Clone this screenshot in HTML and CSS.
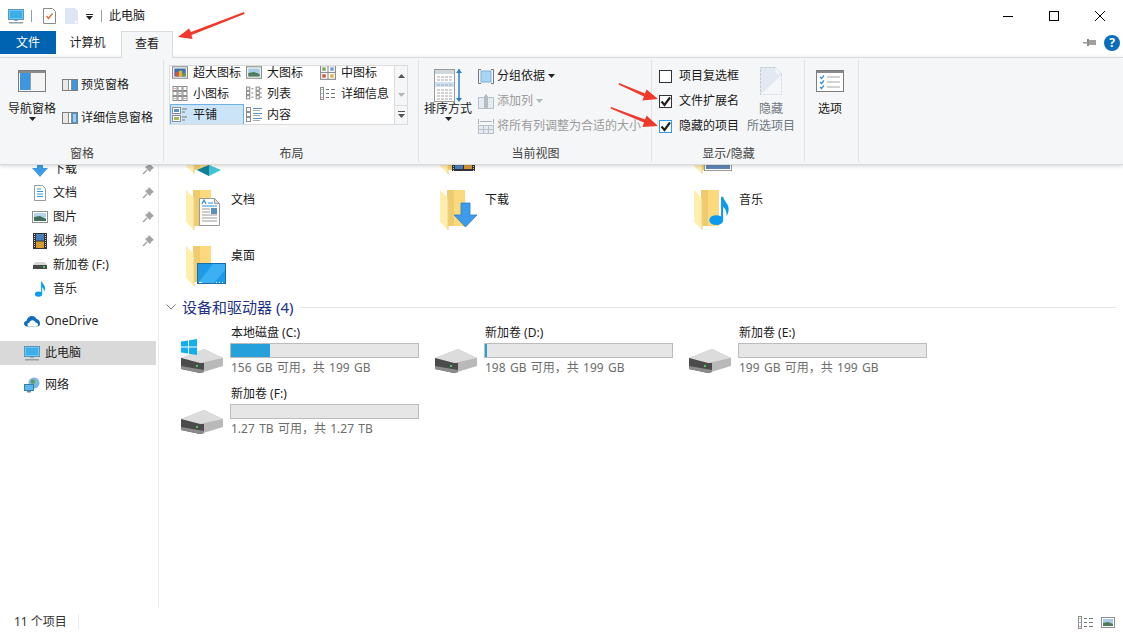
FILE: index.html
```html
<!DOCTYPE html>
<html lang="zh-CN">
<head>
  <meta charset="UTF-8">
  <title>此电脑</title>
  <link rel="stylesheet" href="styles.css">
</head>
<body>

  <!-- shared icons -->
  <svg class="defs" xmlns="http://www.w3.org/2000/svg">
    <symbol id="folder" viewBox="0 0 45 48">
      <rect x="7" y="6" width="18" height="36" fill="#fbd97c"/>
      <rect x="7" y="6" width="7" height="36" fill="#eecb6f"/>
      <polygon points="0,6 8,14 8,46 0,38" fill="#ffeeb0"/>
      <line x1="8" y1="14" x2="8" y2="46" stroke="#f0d283"/>
    </symbol>
    <symbol id="drive" viewBox="0 0 42 24">
      <polygon points="0,9 23,0 42,9 42,17 19,24 0,18" fill="#b9b9b9"/>
      <polygon points="0,9 23,0 42,9 19,14" fill="#dcdcdc"/>
      <polygon points="0,9 19,14 23,14 23,23 19,24 0,20" fill="#4b4b4b"/>
      <polygon points="0,17 23,21 23,23 19,24 0,20" fill="#8b8b8b"/>
      <rect x="15" y="16" width="2" height="2" fill="#3ecf4a"/>
    </symbol>
    <symbol id="pc" viewBox="0 0 16 16">
      <rect x="0.5" y="1.5" width="15" height="10" fill="#6cc7f5" stroke="#5a97b8"/>
      <rect x="2" y="3" width="12" height="7" fill="#3eaee8"/>
      <rect x="6" y="12" width="4" height="1" fill="#9aa7ae"/>
      <rect x="1" y="14" width="14" height="1.5" fill="#8fa0aa"/>
    </symbol>
    <symbol id="pane" viewBox="0 0 16 12">
      <rect x="0.5" y="0.5" width="15" height="11" fill="#fff" stroke="#7f7f7f"/>
      <rect x="1" y="1" width="5" height="10" fill="#e8e8e8"/>
      <rect x="6" y="1" width="1" height="10" fill="#8c8c8c"/>
    </symbol>
    <symbol id="pin" viewBox="0 0 12 12">
      <polygon points="7,0 12,5 10,6 8,9 3,4 6,2" fill="#a3a3a3"/>
      <line x1="5" y1="7" x2="1" y2="11" stroke="#a3a3a3" stroke-width="1.4"/>
    </symbol>
    <symbol id="caret" viewBox="0 0 7 4">
      <polygon points="0,0 7,0 3.5,4" fill="#222"/>
    </symbol>
    <symbol id="check" viewBox="0 0 11 11">
      <path d="M1.500 5.500l3 3.500 5.500-7.500" fill="none" stroke="#222" stroke-width="2.200"/>
    </symbol>
    <symbol id="note" viewBox="0 0 16 22">
      <ellipse cx="6" cy="18" rx="5" ry="3.6" fill="#0a9bf0"/>
      <path d="M9.5 18V1h1.5c.4 3 4 4.600 4 9 0 2-.6 3.500-1.500 5 .3-3-1-5.500-2.500-6.500V18z" fill="#0a9bf0"/>
    </symbol>
    <symbol id="sm-thumb" viewBox="0 0 14 11">
      <rect x="0.500" y="0.500" width="13" height="10" fill="#fff" stroke="#8e8e8e"/>
      <rect x="2" y="2" width="10" height="7" fill="#a9cbe6"/>
      <polygon points="2,9 2,6 7,5 12,7 12,9" fill="#4f7a5c"/>
    </symbol>
    <symbol id="xl-thumb" viewBox="0 0 14 11">
      <rect x="0.500" y="0.500" width="13" height="10" fill="#fff" stroke="#8e8e8e"/>
      <rect x="2" y="2" width="10" height="7" fill="#3f6fa8"/>
      <rect x="3" y="5" width="3" height="4" fill="#d2563c"/>
      <rect x="6" y="4" width="3" height="5" fill="#e0b040"/>
      <rect x="9" y="6" width="3" height="3" fill="#6f9a4a"/>
    </symbol>
    <symbol id="grid-2" viewBox="0 0 14 13">
      <rect x="0.500" y="0.500" width="13" height="12" fill="#fff" stroke="#8e8e8e"/>
      <line x1="7" y1="0.500" x2="7" y2="12.500" stroke="#8e8e8e"/>
      <line x1="0.500" y1="6.500" x2="13.500" y2="6.500" stroke="#8e8e8e"/>
      <rect x="2" y="2" width="3" height="3" fill="#7ea75f"/>
      <rect x="9" y="2" width="3" height="3" fill="#6aa0d0"/>
      <rect x="2" y="8" width="3" height="3" fill="#d2563c"/>
      <rect x="9" y="8" width="3" height="3" fill="#e0b040"/>
    </symbol>
    <symbol id="grid-3" viewBox="0 0 15 15">
      <g fill="none" stroke="#8e8e8e">
        <rect x="0.500" y="0.500" width="4" height="4"/><rect x="5.500" y="0.500" width="4" height="4"/><rect x="10.500" y="0.500" width="4" height="4"/>
        <rect x="0.500" y="5.500" width="4" height="4"/><rect x="5.500" y="5.500" width="4" height="4"/><rect x="10.500" y="5.500" width="4" height="4"/>
        <rect x="0.500" y="10.500" width="4" height="4"/><rect x="5.500" y="10.500" width="4" height="4"/><rect x="10.500" y="10.500" width="4" height="4"/>
      </g>
      <rect x="2" y="2" width="1" height="1" fill="#c0392b"/><rect x="7" y="7" width="1" height="1" fill="#4a8fd0"/>
      <rect x="12" y="12" width="1" height="1" fill="#c0392b"/><rect x="2" y="12" width="1" height="1" fill="#5c9a4a"/>
    </symbol>
    <symbol id="list-2" viewBox="0 0 15 13">
      <g fill="none" stroke="#8e8e8e">
        <rect x="0.500" y="0.500" width="3" height="3"/><rect x="0.500" y="4.500" width="3" height="3"/><rect x="0.500" y="8.500" width="3" height="3"/>
        <rect x="9.500" y="0.500" width="3" height="3"/><rect x="9.500" y="4.500" width="3" height="3"/><rect x="9.500" y="8.500" width="3" height="3"/>
      </g>
      <g stroke="#8e8e8e"><line x1="5" y1="2" x2="7" y2="2"/><line x1="5" y1="6" x2="7" y2="6"/><line x1="5" y1="10" x2="7" y2="10"/><line x1="13" y1="2" x2="15" y2="2"/><line x1="13" y1="6" x2="15" y2="6"/><line x1="13" y1="10" x2="15" y2="10"/></g>
    </symbol>
    <symbol id="rows" viewBox="0 0 16 13">
      <g fill="#fff" stroke="#8e8e8e">
        <rect x="0.500" y="0.500" width="3" height="12"/>
      </g>
      <rect x="1.500" y="2" width="1" height="1" fill="#5c9a4a"/><rect x="1.500" y="6" width="1" height="1" fill="#4a8fd0"/><rect x="1.500" y="10" width="1" height="1" fill="#d2423c"/>
      <g stroke="#777"><line x1="6" y1="2.500" x2="9" y2="2.500"/><line x1="11" y1="2.500" x2="15" y2="2.500"/><line x1="6" y1="6.500" x2="9" y2="6.500"/><line x1="11" y1="6.500" x2="15" y2="6.500"/><line x1="6" y1="10.500" x2="9" y2="10.500"/><line x1="11" y1="10.500" x2="15" y2="10.500"/></g>
    </symbol>
    <symbol id="tile" viewBox="0 0 16 15">
      <rect x="0.500" y="0.500" width="8" height="6" fill="#fff" stroke="#8e8e8e"/>
      <rect x="2" y="2" width="5" height="3" fill="#5b93c9"/>
      <rect x="0.500" y="8.500" width="8" height="6" fill="#fff" stroke="#8e8e8e"/>
      <rect x="2" y="10" width="5" height="3" fill="#a3b84e"/>
      <g stroke="#777"><line x1="10" y1="2" x2="15" y2="2"/><line x1="10" y1="5" x2="13" y2="5"/><line x1="10" y1="10" x2="15" y2="10"/><line x1="10" y1="13" x2="13" y2="13"/></g>
    </symbol>
    <symbol id="content" viewBox="0 0 16 15">
      <g fill="#fff" stroke="#8e8e8e"><rect x="0.500" y="0.500" width="4" height="4"/><rect x="0.500" y="5.500" width="4" height="4"/><rect x="0.500" y="10.500" width="4" height="4"/></g>
      <g stroke="#5c8fc4"><line x1="7" y1="1.500" x2="16" y2="1.500"/><line x1="7" y1="6.500" x2="16" y2="6.500"/><line x1="7" y1="11.500" x2="16" y2="11.500"/></g>
      <g stroke="#aaa"><line x1="7" y1="3.500" x2="14" y2="3.500"/><line x1="7" y1="8.500" x2="14" y2="8.500"/><line x1="7" y1="13.500" x2="14" y2="13.500"/></g>
    </symbol>
  </svg>

  <header class="titlebar">
    <svg class="qa-pc"><use href="#pc"/></svg>
    <span class="qa-sep"></span>
    <svg class="qa-doc" viewBox="0 0 13 16">
      <path d="M.5.500h9l3 3v12H.5z" fill="#fff" stroke="#8a8a8a"/>
      <path d="M3.500 8l2 2.500 4-5" fill="none" stroke="#e8642c" stroke-width="1.300"/>
    </svg>
    <svg class="qa-page" viewBox="0 0 13 16">
      <path d="M0 0h10l3 3v13H0z" fill="#dfe6f3"/>
      <path d="M10 16v-3h3z" fill="#fff"/>
    </svg>
    <svg class="qa-more" viewBox="0 0 7 6">
      <rect width="7" height="1" fill="#222"/>
      <polygon points="0,2 7,2 3.500,6" fill="#222"/>
    </svg>
    <span class="qa-sep qa-sep-2"></span>
    <span class="title">此电脑</span>
    <div class="caption">
      <span class="cap-btn"><svg width="12" height="12" viewBox="0 0 12 12"><line x1="1" y1="6.500" x2="11" y2="6.500" stroke="#000"/></svg></span>
      <span class="cap-btn"><svg width="12" height="12" viewBox="0 0 12 12"><rect x="1.500" y="1.500" width="9" height="9" fill="none" stroke="#000"/></svg></span>
      <span class="cap-btn"><svg width="12" height="12" viewBox="0 0 12 12"><path d="M1 1l10 10M11 1L1 11" stroke="#000"/></svg></span>
    </div>
  </header>

  <nav class="tabs">
    <span class="tab tab-file">文件</span>
    <span class="tab tab-pc">计算机</span>
    <span class="tab tab-view">查看</span>
    <div class="tabs-right">
      <svg class="tab-pin" viewBox="0 0 13 9">
        <rect x="0" y="4" width="5" height="1.500" fill="#9a9a9a"/>
        <rect x="4" y="1" width="2" height="7" fill="#8e8e8e"/>
        <rect x="6" y="2" width="7" height="5" fill="#a0a0a0"/>
      </svg>
      <span class="help">?</span>
    </div>
  </nav>

  <section class="ribbon">

    <div class="group group-pane">
      <div class="group-body">
        <div class="big-btn">
          <svg class="big-icon nav-icon" viewBox="0 0 28 22">
            <rect x="0.500" y="0.500" width="27" height="21" fill="#f4f4f4" stroke="#7d7d7d"/>
            <rect x="1" y="1" width="26" height="2" fill="#8a8a8a"/>
            <rect x="2" y="3" width="10" height="17" fill="#3d96e0"/>
            <rect x="12" y="3" width="1" height="17" fill="#9a9a9a"/>
          </svg>
          <span class="big-label">导航窗格</span>
          <svg class="caret"><use href="#caret"/></svg>
        </div>
        <div class="small-col pane-col">
          <div class="small-row">
            <svg class="pane-icon" viewBox="0 0 16 12">
              <use href="#pane" width="16" height="12"/>
              <rect x="10" y="1" width="5" height="10" fill="#3d96e0"/>
              <rect x="9" y="1" width="1" height="10" fill="#8c8c8c"/>
            </svg>
            <span>预览窗格</span>
          </div>
          <div class="small-row">
            <svg class="pane-icon" viewBox="0 0 16 12">
              <use href="#pane" width="16" height="12"/>
              <rect x="10" y="1" width="5" height="10" fill="#3d96e0"/>
              <rect x="9" y="1" width="1" height="10" fill="#8c8c8c"/>
              <path d="M11 3h3M11 5h3M11 7h3M11 9h3" stroke="#fff"/>
            </svg>
            <span>详细信息窗格</span>
          </div>
        </div>
      </div>
      <div class="group-label">窗格</div>
    </div>

    <div class="group group-layout">
      <div class="group-body">
        <div class="gallery">
          <div class="gallery-items">
            <div class="g-item"><svg class="g-icon"><use href="#xl-thumb"/></svg>超大图标</div>
            <div class="g-item"><svg class="g-icon"><use href="#sm-thumb"/></svg>大图标</div>
            <div class="g-item"><svg class="g-icon"><use href="#grid-2"/></svg>中图标</div>
            <div class="g-item"><svg class="g-icon"><use href="#grid-3"/></svg>小图标</div>
            <div class="g-item"><svg class="g-icon"><use href="#list-2"/></svg>列表</div>
            <div class="g-item"><svg class="g-icon"><use href="#rows"/></svg>详细信息</div>
            <div class="g-item selected"><svg class="g-icon"><use href="#tile"/></svg>平铺</div>
            <div class="g-item"><svg class="g-icon"><use href="#content"/></svg>内容</div>
          </div>
          <div class="gallery-scroll">
            <span><svg width="7" height="4" viewBox="0 0 7 4"><polygon points="3.500,0 7,4 0,4" fill="#555"/></svg></span>
            <span><svg width="7" height="4" viewBox="0 0 7 4"><polygon points="0,0 7,0 3.500,4" fill="#b5b5b5"/></svg></span>
            <span class="more"><svg width="7" height="7" viewBox="0 0 7 7"><rect width="7" height="1" fill="#555"/><polygon points="0,3 7,3 3.500,7" fill="#555"/></svg></span>
          </div>
        </div>
      </div>
      <div class="group-label">布局</div>
    </div>

    <div class="group group-view">
      <div class="group-body">
        <div class="big-btn">
          <svg class="big-icon sort-icon" viewBox="0 0 28 37">
            <rect x="0.500" y="2.500" width="20" height="32" fill="#fff" stroke="#9a9a9a"/>
            <rect x="1" y="3" width="19" height="4" fill="#cfd6dc"/>
            <rect x="1" y="15" width="19" height="5" fill="#cfe2f3"/>
            <path d="M3 10h15M3 13h15M3 18h15M3 23h15M3 26h15M3 29h15M3 32h15" stroke="#a5a5a5" stroke-dasharray="3 1"/>
            <path d="M25 2v32" stroke="#2f7fc7" stroke-width="1.500"/>
            <path d="M22 6l3-4 3 4zM22 31l3 4 3-4z" fill="#2f7fc7"/>
          </svg>
          <span class="big-label">排序方式</span>
          <svg class="caret"><use href="#caret"/></svg>
        </div>
        <div class="small-col view-col">
          <div class="small-row">
            <svg class="view-icon" viewBox="0 0 16 15">
              <path d="M3 .5H.5v14H3M13 .5h2.500v14H13" fill="none" stroke="#777"/>
              <rect x="3" y="2" width="10" height="11" fill="#a8d4f5" stroke="#7fb1d8"/>
            </svg>
            <span>分组依据</span>
            <svg class="caret inline-caret"><use href="#caret"/></svg>
          </div>
          <div class="small-row disabled">
            <svg class="view-icon" viewBox="0 0 16 15">
              <rect x="0.500" y="3.500" width="15" height="11" fill="#e4ebf2" stroke="#b9c2cb"/>
              <rect x="6" y="3" width="4" height="12" fill="#b5bdc5"/>
              <polygon points="8,0 10,3 6,3" fill="#aab2ba"/>
            </svg>
            <span>添加列</span>
            <svg class="caret inline-caret faded"><use href="#caret"/></svg>
          </div>
          <div class="small-row disabled">
            <svg class="view-icon" viewBox="0 0 16 15">
              <path d="M.5 0v5M15.500 0v5M2 2.500h12" fill="none" stroke="#aab2ba"/>
              <rect x="0.500" y="6.500" width="15" height="8" fill="#e4ebf2" stroke="#b9c2cb"/>
              <path d="M5.500 7v7M10.500 7v7M1 10.500h14" stroke="#b9c2cb"/>
            </svg>
            <span>将所有列调整为合适的大小</span>
          </div>
        </div>
      </div>
      <div class="group-label">当前视图</div>
    </div>

    <div class="group group-show">
      <div class="group-body">
        <div class="small-col check-col">
          <label class="small-row check-row"><span class="box"></span>项目复选框</label>
          <label class="small-row check-row"><span class="box"><svg class="tick"><use href="#check"/></svg></span>文件扩展名</label>
          <label class="small-row check-row"><span class="box focus"><svg class="tick"><use href="#check"/></svg></span>隐藏的项目</label>
        </div>
        <div class="hide-btn">
          <svg class="hide-icon" viewBox="0 0 22 28">
            <path d="M.5.500h15l6 6v21H.5z" fill="#e3e9f3" stroke="#c3cad4" stroke-dasharray="3 1"/>
            <path d="M15.500.5v6h6zM.5 27.500L21.500 8v19.500z" fill="#f4f6f9"/>
          </svg>
          <span class="hide-label">隐藏</span>
          <span class="hide-label second">所选项目</span>
        </div>
      </div>
      <div class="group-label">显示/隐藏</div>
    </div>

    <div class="group group-options">
      <div class="group-body">
        <div class="big-btn options-btn">
          <svg class="big-icon nav-icon" viewBox="0 0 28 22">
            <rect x="0.500" y="0.500" width="27" height="21" fill="#fff" stroke="#7d7d7d"/>
            <rect x="1" y="1" width="26" height="2" fill="#8a8a8a"/>
            <path d="M4 7l1.500 1.500L8 5.500M4 12l1.500 1.500L8 10.500M4 17l1.500 1.500L8 15.500" fill="none" stroke="#2f8fde" stroke-width="1.200"/>
            <path d="M11 7h13M11 12h13M11 17h13" stroke="#a5a5a5"/>
          </svg>
          <span class="big-label">选项</span>
        </div>
      </div>
    </div>
  </section>

  <main class="main">
    <aside class="sidebar">
      <div class="side-row sub">
        <svg class="side-icon" viewBox="0 0 16 16"><polygon points="5,0 11,0 11,7 16,7 8,16 0,7 5,7" fill="#3d9be9"/></svg>
        <span class="side-text">下载</span><svg class="side-pin"><use href="#pin"/></svg>
      </div>
      <div class="side-row sub">
        <svg class="side-icon" viewBox="0 0 16 16">
          <path d="M2.500.5h8l3 3v12h-11z" fill="#fff" stroke="#9a9a9a"/>
          <path d="M5 4h4M5 6.500h6M5 9h6M5 11.500h6" stroke="#2f9be0"/>
        </svg>
        <span class="side-text">文档</span><svg class="side-pin"><use href="#pin"/></svg>
      </div>
      <div class="side-row sub">
        <svg class="side-icon" viewBox="0 0 16 16">
          <rect x="0.500" y="2.500" width="15" height="11" fill="#fff" stroke="#8e8e8e"/>
          <rect x="2" y="4" width="12" height="8" fill="#b5d3ea"/>
          <polygon points="2,12 2,8 8,7 14,10 14,12" fill="#3f6f5c"/>
        </svg>
        <span class="side-text">图片</span><svg class="side-pin"><use href="#pin"/></svg>
      </div>
      <div class="side-row sub">
        <svg class="side-icon" viewBox="0 0 16 16">
          <rect x="1" y="0" width="14" height="16" fill="#333"/>
          <rect x="4" y="1" width="8" height="6.500" fill="#4a7fc0"/>
          <rect x="4" y="8.500" width="8" height="6.500" fill="#d89a30"/>
          <path d="M2.500 1v14M13.500 1v14" stroke="#ccc" stroke-dasharray="1 1"/>
        </svg>
        <span class="side-text">视频</span><svg class="side-pin"><use href="#pin"/></svg>
      </div>
      <div class="side-row sub">
        <svg class="side-icon" viewBox="0 0 16 16">
          <path d="M1 8c1-2 2-3 4-3h6c2 0 3 1 4 3z" fill="#d5d5d5"/>
          <rect x="1" y="8" width="14" height="4" fill="#4a4a4a"/>
          <rect x="11" y="9" width="2" height="2" fill="#3ecf4a"/>
        </svg>
        <span class="side-text">新加卷 (F:)</span>
      </div>
      <div class="side-row sub">
        <svg class="side-icon" viewBox="0 0 16 22"><use href="#note"/></svg>
        <span class="side-text">音乐</span>
      </div>
      <div class="side-row top gap">
        <svg class="side-icon" viewBox="0 0 16 12">
          <path d="M3 11.500C1 11.500 0 10 0 8.500S1 6 2.500 6C3 3 5 1 8 1c2 0 3.500 1 4.500 3C14.500 4.500 16 6 16 8.500c0 2-1 3-3 3z" fill="#0f6cbd"/>
          <path d="M5.500 11.500c-1.500 0-2-1-2-2s.7-2 2-2c.6-1.500 1.700-2.300 3-2.300 1.500 0 2.700 1 3 2.300 1.500 0 2.500 1 2.500 2s-.6 2-2 2z" fill="#fff"/>
        </svg>
        <span class="side-text">OneDrive</span>
      </div>
      <div class="side-row top gap active">
        <svg class="side-icon"><use href="#pc"/></svg>
        <span class="side-text">此电脑</span>
      </div>
      <div class="side-row top gap">
        <svg class="side-icon" viewBox="0 0 16 16">
          <circle cx="10" cy="6" r="5.500" fill="#7fb6de"/>
          <path d="M7 3c2-1 4 0 4 2s-3 2-4 1z" fill="#5a9a5a"/>
          <rect x="0.500" y="7.500" width="9" height="6" fill="#5ab8ee" stroke="#3a7ea8"/>
          <rect x="3" y="14" width="4" height="1.500" fill="#6a8ea8"/>
        </svg>
        <span class="side-text">网络</span>
      </div>
    </aside>

    <div class="content">
      <div class="folders">
        <div class="folder">
          <svg class="folder-icon" viewBox="0 0 45 48">
            <use href="#folder" width="45" height="48"/>
            <polygon points="11,42 23,37 35,42 23,48" fill="#3fc3d5"/>
            <polygon points="11,42 23,48 23,37" fill="#157f98"/>
          </svg>
        </div>
        <div class="folder">
          <svg class="folder-icon" viewBox="0 0 45 48">
            <use href="#folder" width="45" height="48"/>
            <rect x="12" y="30" width="23" height="13" fill="#333"/>
            <rect x="15" y="30" width="8" height="11" fill="#4a7fc0"/>
            <rect x="24" y="30" width="8" height="11" fill="#d89a30"/>
            <path d="M13.500 30v13M33.500 30v13" stroke="#ccc" stroke-dasharray="1 1"/>
          </svg>
        </div>
        <div class="folder">
          <svg class="folder-icon" viewBox="0 0 45 48">
            <use href="#folder" width="45" height="48"/>
            <rect x="10.500" y="28.500" width="27" height="14" fill="#fff" stroke="#9a9a9a"/>
            <rect x="12" y="30" width="24" height="11" fill="#5f87b5"/>
          </svg>
        </div>
        <div class="folder">
          <svg class="folder-icon" viewBox="0 0 45 48">
            <use href="#folder" width="45" height="48"/>
            <path d="M13.500 14.500h15l5 5v22h-20z" fill="#fff" stroke="#9a9a9a"/>
            <path d="M28.500 14.500v5h5z" fill="#ddd" stroke="#9a9a9a"/>
            <path d="M16 20l2-4 2 4M22 19h5M16 22h15" fill="none" stroke="#2f8fde" stroke-width="1.200"/>
            <path d="M16 25h8M16 28h8M16 31h15M16 34h15M16 37h15" stroke="#999"/>
            <rect x="25" y="24" width="6" height="6" fill="#5f8fb5"/>
          </svg>
          <span>文档</span>
        </div>
        <div class="folder">
          <svg class="folder-icon" viewBox="0 0 45 48">
            <use href="#folder" width="45" height="48"/>
            <polygon points="21,19 30,19 30,31 37,31 25.500,43 14,31 21,31" fill="#3d9be9" stroke="#2a7fc9" stroke-width="0.800"/>
          </svg>
          <span>下载</span>
        </div>
        <div class="folder">
          <svg class="folder-icon" viewBox="0 0 45 48">
            <use href="#folder" width="45" height="48"/>
            <use href="#note" x="14" y="10" width="22" height="33"/>
          </svg>
          <span>音乐</span>
        </div>
        <div class="folder">
          <svg class="folder-icon" viewBox="0 0 45 48">
            <use href="#folder" width="45" height="48"/>
            <rect x="11.500" y="23.500" width="28" height="20" fill="#1e9be8" stroke="#1a6ca8"/>
            <polygon points="12,43 27,24 39,24 39,30 28,43" fill="#3bb0f2"/>
            <path d="M13 42.500h3M30 42.500h1M33 42.500h1M36 42.500h1" stroke="#fff"/>
          </svg>
          <span>桌面</span>
        </div>
      </div>

      <div class="section-head">
        <svg class="chevron" viewBox="0 0 10 6"><path d="M.5.500L5 5 9.500.5" fill="none" stroke="#777"/></svg>
        <span class="section-title">设备和驱动器 (4)</span>
        <span class="section-line"></span>
      </div>

      <div class="drives">
        <div class="drive">
          <div class="drive-icon">
            <svg class="hdd"><use href="#drive"/></svg>
            <svg class="win-logo" viewBox="0 0 16 16"><path d="M0 2.500l7-1v6H0zM8 1.300L16 0v7.500H8zM0 8.500h7v6l-7-1zM8 8.500h8V16l-8-1.200z" fill="#12aef0"/></svg>
          </div>
          <div class="drive-info">
            <div class="drive-name">本地磁盘 (C:)</div>
            <div class="bar"><div class="bar-fill" style="width: 21%"></div></div>
            <div class="drive-free">156 GB 可用，共 199 GB</div>
          </div>
        </div>
        <div class="drive">
          <div class="drive-icon"><svg class="hdd"><use href="#drive"/></svg></div>
          <div class="drive-info">
            <div class="drive-name">新加卷 (D:)</div>
            <div class="bar"><div class="bar-fill" style="width: 1%"></div></div>
            <div class="drive-free">198 GB 可用，共 199 GB</div>
          </div>
        </div>
        <div class="drive">
          <div class="drive-icon"><svg class="hdd"><use href="#drive"/></svg></div>
          <div class="drive-info">
            <div class="drive-name">新加卷 (E:)</div>
            <div class="bar"></div>
            <div class="drive-free">199 GB 可用，共 199 GB</div>
          </div>
        </div>
        <div class="drive">
          <div class="drive-icon"><svg class="hdd"><use href="#drive"/></svg></div>
          <div class="drive-info">
            <div class="drive-name">新加卷 (F:)</div>
            <div class="bar"></div>
            <div class="drive-free">1.27 TB 可用，共 1.27 TB</div>
          </div>
        </div>
      </div>
    </div>
  </main>

  <footer class="statusbar">
    <span class="status-text">11 个项目</span>
    <span class="status-sep"></span>
    <div class="status-views">
      <svg class="view-a"><use href="#rows"/></svg>
      <svg class="view-b"><use href="#sm-thumb"/></svg>
    </div>
  </footer>

  <!-- red annotation arrows drawn over the screenshot -->
  <svg class="annotations" viewBox="0 0 1123 632">
    <polygon points="244,12 191,32 189,28.500 178,37 192.500,39 191.500,35 244.500,14"/>
    <polygon points="619,83 645,93.500 646.500,89.500 658,99 642.500,100.500 644,96.500 618.500,84.500"/>
    <polygon points="611,107 645,119.500 646.500,115.500 658,126 642.500,127 644,122.500 610.500,108.500"/>
  </svg>

</body>
</html>
```

FILE: styles.css
```css
* {
  box-sizing: border-box;
}

html, body {
  margin: 0;
  height: 632px;
  overflow: hidden;
}

body {
  display: flex;
  flex-direction: column;
  position: relative;
  background-color: #fff;
  color: #1a1a1a;
  font-family: "Noto Sans", "Noto Sans CJK SC", sans-serif;
  font-size: 12px;
  line-height: 16px;
}

svg {
  display: block;
  flex: none;
}

.defs {
  width: 0;
  height: 0;
  position: absolute;
}

/* title bar */
.titlebar {
  height: 31px;
  display: flex;
  align-items: center;
  padding-left: 8px;
  flex: none;
}

.qa-pc { width: 16px; height: 16px; }
.qa-sep { width: 1px; height: 12px; background-color: #9a9a9a; margin-left: 7px; }
.qa-doc { width: 13px; height: 16px; margin-left: 11px; }
.qa-page { width: 13px; height: 16px; margin-left: 9px; }
.qa-more { width: 7px; height: 6px; margin-left: 8px; margin-top: 3px; }
.qa-sep-2 { margin-left: 8px; }
.title { margin-left: 7px; }

.caret { width: 7px; height: 4px; }

.caption {
  margin-left: auto;
  display: flex;
  height: 100%;
}

.cap-btn {
  width: 46px;
  display: flex;
  align-items: center;
  justify-content: center;
}

/* tabs */
.tabs {
  height: 26px;
  display: flex;
  flex: none;
  position: relative;
  z-index: 3;
}

.tab {
  display: flex;
  align-items: center;
  justify-content: center;
  height: 23px;
}

.tab-file {
  width: 56px;
  background-color: #0063b1;
  color: #fff;
}

.tab-pc { width: 63px; margin-right: 2px; }

.tab-view {
  width: 52px;
  height: 27px;
  background-color: #f5f6f7;
  border: 1px solid #dadbdc;
  border-bottom: 0;
  padding-bottom: 3px;
}

.tabs-right {
  margin-left: auto;
  display: flex;
  align-items: center;
  padding-right: 3px;
  height: 23px;
}

.tab-pin { width: 13px; height: 9px; margin-right: 8px; }

.help {
  width: 16px;
  height: 16px;
  border-radius: 50%;
  background-color: #0a6ebd;
  color: #fff;
  font-weight: 700;
  font-size: 12px;
  text-align: center;
}

/* ribbon */
.ribbon {
  height: 108px;
  flex: none;
  display: flex;
  background-color: #f5f6f7;
  border-top: 1px solid #dadbdc;
  border-bottom: 1px solid #dadbdc;
  box-shadow: 0 1px 4px rgba(0, 0, 0, 0.18);
  position: relative;
  z-index: 2;
}

.group {
  display: flex;
  flex-direction: column;
  position: relative;
  flex: none;
}

.group::after {
  content: "";
  position: absolute;
  right: 0;
  top: 2px;
  bottom: 2px;
  width: 1px;
  background-color: #e1e2e3;
}

.group-pane { width: 164px; }
.group-layout { width: 255px; }
.group-view { width: 233px; }
.group-show { width: 153px; }
.group-options { width: 54px; }

.group-body {
  flex: 1;
  display: flex;
  min-height: 0;
}

.group-label {
  height: 22px;
  line-height: 24px;
  text-align: center;
  color: #444;
}

.group-pane .group-body { padding-left: 8px; }
.group-view .group-body { padding-left: 5px; }
.group-show .group-body { padding-left: 7px; }
.group-layout .group-body { padding: 7px 0 0 5px; }
.group-options .group-body { padding-left: 1px; }

.big-btn {
  width: 48px;
  display: flex;
  flex-direction: column;
  align-items: center;
}

.big-icon { width: 28px; }
.nav-icon { height: 22px; margin-top: 12px; }
.sort-icon { height: 37px; margin-top: 9px; }
.big-label { white-space: nowrap; margin-top: 9px; }
.sort-icon + .big-label { margin-top: -3px; }
.big-btn .caret { margin-top: 0; }

.small-col {
  display: flex;
  flex-direction: column;
}

.small-row {
  display: flex;
  align-items: center;
  height: 16px;
  white-space: nowrap;
}

.pane-col { margin-left: 6px; padding-top: 19px; gap: 17px; }
.pane-icon { width: 16px; height: 12px; margin-right: 3px; }

.view-col { margin-left: 6px; padding-top: 10px; gap: 9px; }
.view-icon { width: 16px; height: 15px; margin-right: 3px; }
.disabled { color: #9a9a9a; }
.inline-caret { margin-left: 3px; }
.faded { opacity: 0.3; }

.check-col { padding-top: 10px; gap: 9px; }
.check-row { gap: 7px; }

.box {
  width: 13px;
  height: 13px;
  flex: none;
  border: 1px solid #333;
  background-color: #fff;
  position: relative;
}

.box.focus { border-color: #2f9bf0; }

.tick {
  width: 11px;
  height: 11px;
}

.hide-btn {
  width: 48px;
  margin-left: 8px;
  display: flex;
  flex-direction: column;
  align-items: center;
  color: #6e7680;
}

.hide-icon { width: 22px; height: 28px; margin-top: 9px; }
.hide-label { white-space: nowrap; margin-top: 6px; }
.hide-label.second { margin-top: 1px; }

/* layout gallery */
.gallery {
  display: flex;
  width: 239px;
  height: 60px;
  border: 1px solid #dcdcdc;
  background-color: #fff;
  overflow: hidden;
}

.gallery-items {
  width: 224px;
  margin-top: -4px;
  display: grid;
  grid-template-columns: 74px 74px 76px;
  grid-auto-rows: 21px;
}

.g-item {
  display: flex;
  align-items: center;
  padding-left: 2px;
  white-space: nowrap;
}

.g-icon { width: 16px; height: 15px; margin-right: 5px; }

.g-item.selected {
  background-color: #cce4f7;
  box-shadow: inset 0 0 0 1px #6eb0e6;
}

.gallery-scroll {
  width: 14px;
  display: flex;
  flex-direction: column;
  background-color: #f5f6f7;
  border-left: 1px solid #dcdcdc;
}

.gallery-scroll span {
  height: 20px;
  display: flex;
  align-items: center;
  justify-content: center;
}

.gallery-scroll .more { border-top: 1px solid #dcdcdc; }

/* main area */
.main {
  flex: 1;
  min-height: 0;
  display: flex;
  overflow: hidden;
}

.sidebar {
  width: 159px;
  flex: none;
  border-right: 1px solid #ececec;
  overflow: hidden;
}

.side-row {
  height: 24px;
  width: 156px;
  display: flex;
  align-items: center;
}

.side-row:first-child { margin-top: -8px; }
.side-row.sub { padding-left: 32px; }
.side-row.top { padding-left: 24px; }
.side-row.gap { margin-top: 8px; }
.side-row.active { background-color: #d9d9d9; }

.side-icon { width: 16px; height: 16px; margin-right: 5px; }
.side-text { flex: 1; color: #222; }
.side-pin { width: 12px; height: 12px; margin-right: 2px; }

.content {
  flex: 1;
  min-width: 0;
  overflow: hidden;
}

.folders {
  margin-top: -37px;
  padding-left: 27px;
  display: grid;
  grid-template-columns: repeat(3, 254px);
  grid-auto-rows: 56px;
}

.folder {
  display: flex;
  line-height: 20px;
}

.folder-icon { width: 45px; height: 48px; }
.folder span { padding-top: 6px; }

.section-head {
  height: 22px;
  display: flex;
  align-items: center;
  padding-left: 7px;
  padding-right: 7px;
}

.chevron { width: 10px; height: 6px; margin-right: 6px; }

.section-title {
  font-size: 15px;
  color: #1e3287;
  white-space: nowrap;
}

.section-line {
  flex: 1;
  height: 1px;
  margin-left: 7px;
  background-color: #e5e5e5;
}

.drives {
  margin-top: 4px;
  padding-left: 22px;
  display: grid;
  grid-template-columns: repeat(3, 254px);
  grid-auto-rows: 61px;
}

.drive { display: flex; }

.drive-icon {
  width: 49px;
  flex: none;
  position: relative;
  padding-top: 27px;
}

.hdd { width: 42px; height: 24px; }

.win-logo {
  position: absolute;
  left: 0;
  top: 17px;
  width: 16px;
  height: 16px;
}

.drive-info { width: 189px; }

.drive-name {
  height: 21px;
  line-height: 22px;
  padding-left: 1px;
}

.bar {
  height: 15px;
  background-color: #e6e6e6;
  border: 1px solid #bcbcbc;
}

.bar-fill {
  height: 100%;
  background-color: #26a0da;
}

.drive-free {
  height: 18px;
  line-height: 20px;
  padding-left: 1px;
  color: #6d6d6d;
  word-spacing: 1.2px;
}

/* status bar */
.statusbar {
  height: 24px;
  flex: none;
  display: flex;
  align-items: center;
  padding: 4px 8px 0 14px;
}

.status-text { width: 64px; color: #333; }
.status-sep { width: 1px; height: 16px; background-color: #ececec; }

.status-views {
  margin-left: auto;
  display: flex;
  gap: 7px;
}

.view-a { width: 16px; height: 13px; }
.view-b { width: 14px; height: 11px; margin-top: 1px; }

/* annotations */
.annotations {
  position: absolute;
  left: 0;
  top: 0;
  width: 1123px;
  height: 632px;
  z-index: 5;
  pointer-events: none;
  fill: #f0392b;
}
```
